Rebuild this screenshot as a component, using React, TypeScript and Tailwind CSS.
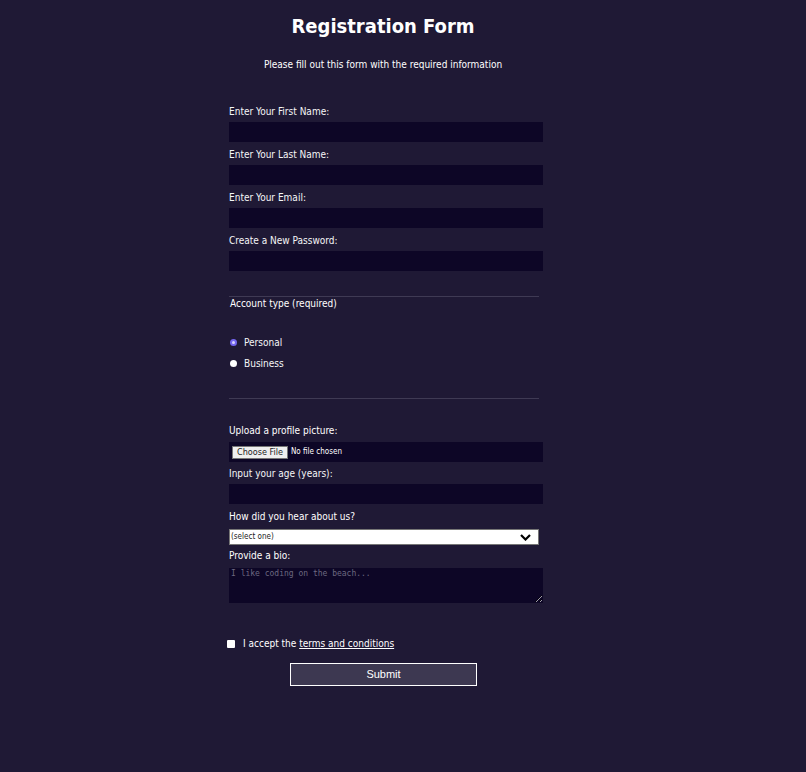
import React from "react";

const font = { fontFamily: 'Tahoma, "DejaVu Sans Condensed", "DejaVu Sans", sans-serif' };

function Field({ label, type = "text" }: { label: string; type?: string }) {
  return (
    <div className="flex flex-col">
      <label className="h-[16px] text-[10px] leading-[12px] text-[#f5f6f7]">{label}</label>
      <input type={type} className="h-[20px] w-[314px] border-0 bg-[#0d0626] outline-none" />
      <div className="h-[7px]" />
    </div>
  );
}

function Radio({ checked, label }: { checked?: boolean; label: string }) {
  return (
    <div className="flex h-[21px] items-center">
      <span
        className={
          checked
            ? "ml-[1px] flex h-[7px] w-[7px] items-center justify-center rounded-full bg-[#7466f0]"
            : "ml-[1px] h-[7px] w-[7px] rounded-full bg-white"
        }
      >
        {checked && <span className="h-[3px] w-[3px] rounded-full bg-[#d9d4ff]" />}
      </span>
      <span className="ml-[7px] text-[10px] text-[#f5f6f7]">{label}</span>
    </div>
  );
}

export default function App() {
  return (
    <div className="min-h-[772px] w-full bg-[#1f1935] text-white" style={font}>
      <div className="flex w-[766px] flex-col items-center">
        <h1 className="mt-[13px] text-[20px] font-bold leading-[26px]">Registration Form</h1>
        <p className="mt-[20px] text-[10px] leading-[12px]">
          Please fill out this form with the required information
        </p>

        <form
          className="ml-[229px] mt-[35px] flex w-[314px] flex-col self-start"
          onSubmit={(e) => e.preventDefault()}
        >
          <Field label="Enter Your First Name:" />
          <Field label="Enter Your Last Name:" />
          <Field label="Enter Your Email:" type="email" />
          <Field label="Create a New Password:" type="password" />

          <div className="mt-[18px] w-[310px] border-t border-[#3f3a54]" />
          <div className="ml-[1px] mt-[1px] text-[10px] leading-[12px]">Account type (required)</div>
          <div className="mt-[22px] flex flex-col">
            <Radio checked label="Personal" />
            <Radio label="Business" />
          </div>
          <div className="mt-[24px] w-[310px] border-t border-[#3f3a54]" />

          <div className="mt-[26px] flex flex-col">
            <label className="h-[17px] text-[10px] leading-[12px]">Upload a profile picture:</label>
            <div className="flex h-[20px] w-[314px] items-center bg-[#0d0626] pl-[3px]">
              <span className="border border-[#767676] bg-[#efefef] px-[4px] text-[9px] leading-[11px] text-[#222]">
                Choose File
              </span>
              <span className="ml-[3px] text-[8px] text-white">No file chosen</span>
            </div>
            <div className="h-[6px]" />
          </div>

          <Field label="Input your age (years):" type="number" />

          <div className="flex flex-col">
            <label className="h-[18px] text-[10px] leading-[12px]">How did you hear about us?</label>
            <div className="flex h-[16px] w-[310px] items-center justify-between border border-[#767676] bg-white pl-[1px] pr-[7px]">
              <span className="text-[8px] text-[#222]">(select one)</span>
              <svg width="11" height="7" viewBox="0 0 11 7">
                <path d="M1 1 L5.5 5.5 L10 1" stroke="#000" strokeWidth="2.2" fill="none" />
              </svg>
            </div>
            <div className="h-[5px]" />
          </div>

          <div className="flex flex-col">
            <label className="h-[18px] text-[10px] leading-[12px]">Provide a bio:</label>
            <textarea
              placeholder="I like coding on the beach..."
              className="h-[35px] w-[314px] resize-y border-0 bg-[#0d0626] px-[2px] py-[1px] text-[8px] leading-[10px] text-white outline-none placeholder:text-[#6c6880]"
              style={{ fontFamily: '"DejaVu Sans Mono", monospace' }}
            />
          </div>

          <div className="-ml-[2px] mt-[35px] flex items-center">
            <span className="h-[8px] w-[8px] rounded-[1px] bg-white" />
            <span className="ml-[8px] text-[10px] leading-[12px]">
              I accept the <span className="underline">terms and conditions</span>
            </span>
          </div>

          <button
            type="submit"
            className="ml-[61px] mt-[13px] h-[23px] w-[187px] border border-white bg-[#3d3851] text-[11px] text-white"
            style={{ fontFamily: '"Liberation Sans", Arial, sans-serif' }}
          >
            Submit
          </button>
        </form>
      </div>
    </div>
  );
}
